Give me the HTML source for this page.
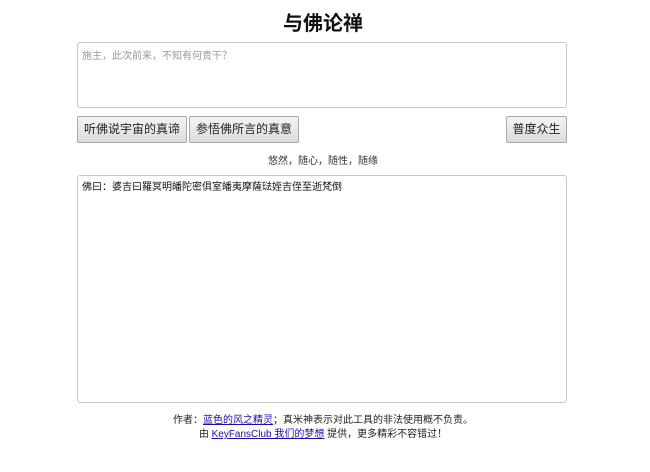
<!DOCTYPE html>
<html><head><meta charset="utf-8"><style>
body{margin:0;width:650px;height:472px;background:#fff;font-family:"Liberation Sans","Noto Sans CJK SC",sans-serif;position:relative;overflow:hidden}
.a{position:absolute}
h1{position:absolute;left:0;width:646px;top:7px;margin:0;text-align:center;font-size:20px;font-weight:bold;color:#111}
.ta{position:absolute;left:77px;width:490px;border:1px solid #c8c8c8;border-radius:3px;box-sizing:border-box;font-size:10px}
.btn{position:absolute;top:116px;height:27px;border:1px solid #aaa;border-radius:2px;background:linear-gradient(#f4f4f4,#dcdcdc);box-sizing:border-box;font-size:12px;color:#222;text-align:center;line-height:25px}
a{color:#1a0dab}
</style></head><body>
<h1>与佛论禅</h1>
<div class="ta" style="top:42px;height:66px;padding:4px 4px;color:#999">施主，此次前来，不知有何贵干？</div>
<div class="btn" style="left:77px;width:110px">听佛说宇宙的真谛</div>
<div class="btn" style="left:189px;width:110px">参悟佛所言的真意</div>
<div class="btn" style="left:506px;width:61px">普度众生</div>
<div class="a" style="left:0;width:646px;top:152px;text-align:center;font-size:10px;color:#333">悠然，随心，随性，随缘</div>
<div class="ta" style="top:175px;height:228px;padding:2px 4px;color:#111">佛曰：婆吉曰羅冥明皤陀密俱室皤夷摩薩琺姪吉侄至逝梵倒</div>
<div class="a" style="left:0;width:646px;top:414px;text-align:center;font-size:10px;line-height:14px;color:#222">作者：<a href="#">蓝色的风之精灵</a>；真米神表示对此工具的非法使用概不负责。<br>由 <a href="#">KeyFansClub 我们的梦想</a> 提供，更多精彩不容错过！</div>
</body></html>
